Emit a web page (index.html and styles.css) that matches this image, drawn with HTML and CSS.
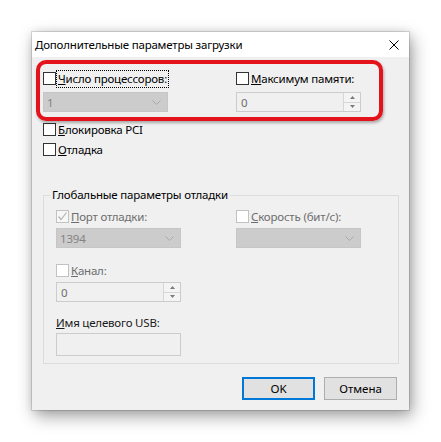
FILE: index.html
```html
<!DOCTYPE html>
<html lang="ru">
<head>
<meta charset="utf-8">
<title>Дополнительные параметры загрузки</title>
<link rel="stylesheet" href="styles.css">
</head>
<body>
<div class="dialog">
  <div class="titlebar">
    <span class="title">Дополнительные параметры загрузки</span>
    <svg class="close" width="10" height="10" viewBox="0 0 10 10"><path d="M0.5 0.5L9.5 9.5M9.5 0.5L0.5 9.5" stroke="#000" stroke-width="1" fill="none"/></svg>
  </div>
  <div class="body">
    <div class="annot"></div>
    <div class="grid top">
      <div class="chk"><span class="box"></span><span class="lbl focus"><u>Ч</u>исло процессоров:</span></div>
      <div class="chk"><span class="box"></span><span class="lbl"><u>М</u>аксимум памяти:</span></div>
      <div class="combo"><span class="val">1</span><svg class="chev" width="9" height="5" viewBox="0 0 9 5"><path d="M0.5 0.5L4.5 4.5L8.5 0.5" stroke="#a8a8a8" fill="none"/></svg></div>
      <div class="spin"><span class="val">0</span><div class="spinbtns"><span class="sb"><svg width="5" height="3" viewBox="0 0 5 3"><path d="M0 3L2.5 0L5 3Z" fill="#7a7a7a"/></svg></span><span class="sb"><svg width="5" height="3" viewBox="0 0 5 3"><path d="M0 0L5 0L2.5 3Z" fill="#7a7a7a"/></svg></span></div></div>
    </div>
    <div class="chk pci"><span class="box"></span><span class="lbl"><u>Б</u>локировка PCI</span></div>
    <div class="chk dbg"><span class="box"></span><span class="lbl"><u>О</u>тладка</span></div>
    <fieldset class="group">
      <legend>Глобальные параметры отладки</legend>
      <div class="grid inner">
        <div class="chk dis"><span class="box checked"><svg width="11" height="11" viewBox="0 0 11 11"><path d="M1.5 5.5L4 8.5L9.5 1.5" stroke="#b4b4b4" stroke-width="1.2" fill="none"/></svg></span><span class="lbl"><u>П</u>орт отладки:</span></div>
        <div class="chk dis"><span class="box"></span><span class="lbl"><u>С</u>корость (бит/с):</span></div>
        <div class="combo"><span class="val">1394</span><svg class="chev" width="9" height="5" viewBox="0 0 9 5"><path d="M0.5 0.5L4.5 4.5L8.5 0.5" stroke="#a8a8a8" fill="none"/></svg></div>
        <div class="combo"><span class="val"></span><svg class="chev" width="9" height="5" viewBox="0 0 9 5"><path d="M0.5 0.5L4.5 4.5L8.5 0.5" stroke="#a8a8a8" fill="none"/></svg></div>
      </div>
      <div class="chk dis channel"><span class="box"></span><span class="lbl"><u>К</u>анал:</span></div>
      <div class="spin small"><span class="val">0</span><div class="spinbtns"><span class="sb"><svg width="5" height="3" viewBox="0 0 5 3"><path d="M0 3L2.5 0L5 3Z" fill="#7a7a7a"/></svg></span><span class="sb"><svg width="5" height="3" viewBox="0 0 5 3"><path d="M0 0L5 0L2.5 3Z" fill="#7a7a7a"/></svg></span></div></div>
      <div class="usb-label"><u>И</u>мя целевого USB:</div>
      <div class="textbox"></div>
    </fieldset>
    <div class="buttons">
      <button class="btn default">OK</button>
      <button class="btn">Отмена</button>
    </div>
  </div>
</div>
</body>
</html>
```
FILE: styles.css
```css
* { box-sizing: border-box; }
html, body { margin: 0; }
body {
  background: #fff;
  padding: 32px 0 0 32px;
  font-family: "Noto Sans", "Open Sans", sans-serif;
  font-size: 11.5px;
  letter-spacing: -0.2px;
  color: #000;
  height: 442px;
  overflow: hidden;
}
.dialog {
  position: relative;
  width: 377px;
  height: 378px;
  background: #f0f0f0;
  display: flex;
  flex-direction: column;
  box-shadow: 0 0 0 1px rgba(0,0,0,0.12), 3px 6px 16px rgba(0,0,0,0.38), 0 0 8px rgba(0,0,0,0.1);
}
.titlebar {
  height: 25px;
  background: #fff;
  display: flex;
  align-items: center;
  justify-content: space-between;
  padding: 0 10px 0 3px;
}
.title { line-height: 16px; }
.close { display: block; }
.body {
  display: flex;
  flex-direction: column;
  padding: 15px 10px 10px 11px;
}
.annot {
  position: absolute;
  left: 4px;
  top: 28px;
  width: 347px;
  height: 61px;
  border: 4px solid #e3121b;
  border-radius: 10px;
  box-shadow: 1px 2px 3px rgba(0,0,0,0.3);
  pointer-events: none;
}
.grid { display: grid; }
.grid.top { grid-template-columns: 193px 125px; row-gap: 7px; }
.grid.inner { grid-template-columns: 180px 125px; row-gap: 5px; }
.chk {
  display: flex;
  align-items: center;
  height: 13px;
  gap: 2px;
  white-space: nowrap;
}
.box {
  width: 13px;
  height: 13px;
  flex: none;
  border: 1px solid #333;
  background: #fff;
  display: flex;
  align-items: center;
  justify-content: center;
}
.lbl { line-height: 14px; }
.focus { outline: 1px dotted #000; outline-offset: 1px; }
.chk.dis .lbl { color: #6d6d6d; }
.chk.dis .box { border-color: #c2c2c2; }
.box.checked { background: #f7f7f7; }
.pci { margin-top: 11px; }
.dbg { margin-top: 7px; }
.combo {
  width: 125px;
  height: 20px;
  background: #cccccc;
  border: 1px solid #c6c6c6;
  display: flex;
  align-items: center;
  justify-content: space-between;
  padding: 0 6px 0 3px;
  color: #838383;
}
.spin {
  width: 125px;
  height: 20px;
  background: #f0f0f0;
  border: 1px solid #cccccc;
  display: flex;
  align-items: center;
  justify-content: space-between;
  color: #6d6d6d;
  padding-left: 4px;
}
.spinbtns {
  width: 17px;
  height: 100%;
  display: flex;
  flex-direction: column;
  border-left: 1px solid #d6d6d6;
}
.sb {
  flex: 1;
  display: flex;
  align-items: center;
  justify-content: center;
  background: #f4f4f4;
}
.sb + .sb { border-top: 1px solid #d6d6d6; }
.sb svg { display: block; }
.group {
  margin: 31px 0 0 0;
  border: 1px solid #dcdcdc;
  padding: 7px 0 7px 12px;
  min-width: 0;
}
.group legend {
  padding: 0 2px;
  margin-left: -6px;
  line-height: 16px;
}
.channel { margin-top: 16px; }
.spin.small { margin-top: 5px; }
.usb-label { margin-top: 13px; line-height: 16px; color: #1a1a1a; }
.textbox {
  margin-top: 2px;
  width: 125px;
  height: 23px;
  border: 1px solid #cccccc;
  background: #f0f0f0;
}
.buttons {
  display: flex;
  justify-content: flex-end;
  gap: 9px;
  margin-top: 13px;
  padding-right: 2px;
}
.btn {
  width: 73px;
  height: 23px;
  background: #e1e1e1;
  border: 1px solid #adadad;
  font: inherit;
  color: #000;
  padding: 0;
}
.btn.default { border: 2px solid #0078d7; }
```
